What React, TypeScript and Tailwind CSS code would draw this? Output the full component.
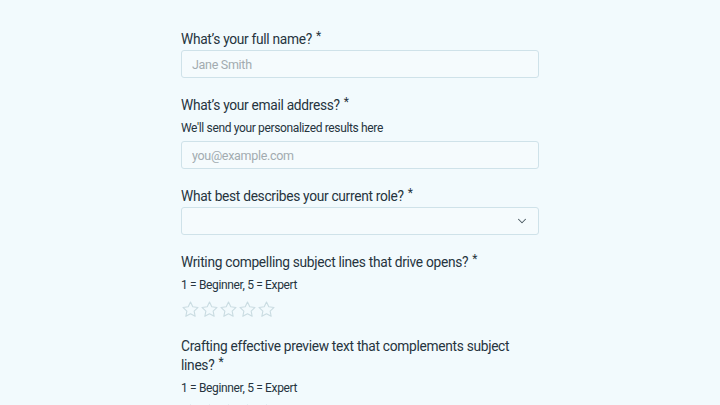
import { ChevronDown } from "lucide-react"

function Star() {
  return (
    <svg width="19" height="19" viewBox="0 0 24 24" fill="none" stroke="#cadce2" strokeWidth="1.4" strokeLinejoin="round">
      <path d="M12 2.5l2.9 6.1 6.6.8-4.9 4.6 1.3 6.6L12 17.3l-5.9 3.3 1.3-6.6-4.9-4.6 6.6-.8z" />
    </svg>
  )
}

function Label({ children }: { children: React.ReactNode }) {
  return (
    <label className="block text-[13.75px] leading-[19px] tracking-[-0.3px] text-[#26343e]">
      {children}
      <span className="relative -top-[4px] ml-[4px] text-[12px] leading-none">*</span>
    </label>
  )
}

function Hint({ children }: { children: React.ReactNode }) {
  return <p className="mt-[4px] text-[12px] leading-[18px] tracking-[-0.35px] text-[#26343e]">{children}</p>
}

function Stars() {
  return (
    <div className="mt-[6px] flex">
      {[1, 2, 3, 4, 5].map((n) => (
        <Star key={n} />
      ))}
    </div>
  )
}

const inputCls =
  "h-[28px] w-full rounded-[3px] border border-[#cfe2e9] bg-[#f5fbfd] px-[10px] text-[12.5px] tracking-[-0.3px] text-[#26343e] placeholder:text-[#a2abb0] outline-none"

export default function App() {
  return (
    <div
      className="min-h-[405px] bg-[#f2fafd] pt-[30px]"
      style={{ fontFamily: "Roboto, 'Noto Sans', sans-serif" }}
    >
      <div className="mx-auto flex w-[358px] flex-col gap-[18px]">
        <div>
          <Label>What’s your full name?</Label>
          <input placeholder="Jane Smith" className={`mt-[1px] ${inputCls}`} />
        </div>
        <div>
          <Label>What’s your email address?</Label>
          <Hint>We'll send your personalized results here</Hint>
          <input placeholder="you@example.com" className={`mt-[4px] ${inputCls}`} />
        </div>
        <div>
          <Label>What best describes your current role?</Label>
          <div className="mt-[1px] flex h-[28px] w-full items-center justify-end rounded-[3px] border border-[#cfe2e9] bg-[#f5fbfd] px-[9px]">
            <ChevronDown size={14} strokeWidth={1.8} className="text-[#4a5860]" />
          </div>
        </div>
        <div>
          <Label>Writing compelling subject lines that drive opens?</Label>
          <Hint>1 = Beginner, 5 = Expert</Hint>
          <Stars />
        </div>
        <div>
          <Label>Crafting effective preview text that complements subject lines?</Label>
          <Hint>1 = Beginner, 5 = Expert</Hint>
          <Stars />
        </div>
      </div>
    </div>
  )
}
